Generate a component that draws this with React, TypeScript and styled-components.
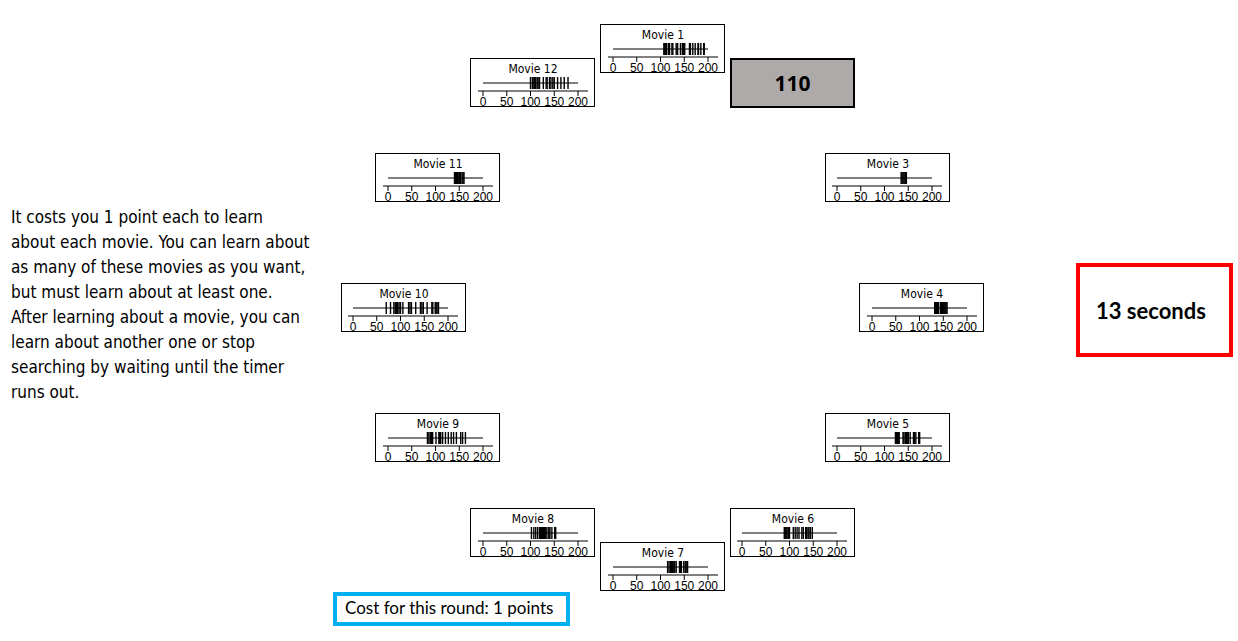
import React from "react";
import styled, { createGlobalStyle } from "styled-components";

const GlobalStyle = createGlobalStyle`
  body {
    margin: 0;
    background: #fff;
    color: #000;
  }
`;

const Page = styled.main`
  display: grid;
  grid-template-columns: 306px minmax(651px, 1fr) 157px;
  column-gap: 16px;
  padding: 24px 5px 15px 11px;
`;

const Instructions = styled.p`
  margin: 0;
  padding-top: 181px;
  font: 17px/25px "DejaVu Sans Condensed", "DejaVu Sans", sans-serif;
  white-space: nowrap;
`;

const Search = styled.section`
  display: flex;
  flex-direction: column;
  align-items: flex-start;
`;

const Ring = styled.div`
  position: relative;
  width: 643px;
  height: 568px;
  margin-left: 8px;
`;

const Card = styled.button<{ $x: number; $y: number }>`
  position: absolute;
  left: ${(p) => p.$x}px;
  top: ${(p) => p.$y}px;
  box-sizing: border-box;
  width: 125px;
  height: 49px;
  padding: 0;
  border: 1px solid #000;
  background: #fff;
  overflow: hidden;
  cursor: pointer;
`;

const RevealedCard = styled(Card)`
  height: 50px;
  border-width: 2px;
  background: #aeaaa9;
  color: #000;
  font: bold 21px/24px "Open Sans", sans-serif;
`;

const Plot = styled.svg`
  display: block;
  stroke: #000;
`;

const PlotTitle = styled.text`
  font: 12px "DejaVu Sans Condensed", "DejaVu Sans", sans-serif;
  text-anchor: middle;
  stroke: none;
`;

const TickLabel = styled.text`
  font: 12px "Liberation Sans", Arial, sans-serif;
  text-anchor: middle;
  stroke: none;
`;

const Cost = styled.output`
  box-sizing: border-box;
  min-width: 237px;
  padding: 2px 8px 4px;
  border: 4px solid #00b0f0;
  font: 17px/20px Lato, sans-serif;
  white-space: nowrap;
`;

const Timer = styled.div`
  align-self: start;
  display: flex;
  align-items: center;
  box-sizing: border-box;
  height: 94px;
  margin-top: 239px;
  padding: 2px 0 0 16px;
  border: 4px solid #f00;
  font: bold 22px/24px Lato, sans-serif;
  white-space: nowrap;
`;

type Movie = {
  id: number;
  x: number;
  y: number;
  origin: number;
  ratings: number[];
  revealed?: number;
};

const movies: Movie[] = [
  { id: 1, x: 259, y: 0, origin: 12, ratings: [107, 109, 111, 113, 117, 119, 124, 126, 133, 136, 142, 146, 148, 151, 161, 163, 168, 173, 179, 180, 185, 191, 192] },
  { id: 2, x: 389, y: 34, origin: 11, ratings: [], revealed: 110 },
  { id: 3, x: 484, y: 129, origin: 11, ratings: [135, 137, 139, 141, 143, 145, 146] },
  { id: 4, x: 518, y: 259, origin: 12, ratings: [132, 134, 136, 138, 140, 144, 146, 148, 150, 152, 154, 156, 158] },
  { id: 5, x: 484, y: 389, origin: 11, ratings: [123, 125, 127, 129, 131, 139, 141, 144, 146, 149, 150, 154, 161, 163, 166, 172, 174] },
  { id: 6, x: 389, y: 484, origin: 11, ratings: [89, 91, 93, 95, 98, 100, 108, 112, 116, 120, 126, 129, 134, 136, 139, 141, 144, 148] },
  { id: 7, x: 259, y: 518, origin: 12, ratings: [115, 118, 121, 123, 125, 128, 130, 133, 140, 142, 144, 149, 152, 154, 157] },
  { id: 8, x: 129, y: 484, origin: 12, ratings: [102, 107, 111, 115, 119, 121, 123, 125, 127, 129, 131, 133, 137, 139, 141, 145, 151, 153] },
  { id: 9, x: 34, y: 389, origin: 12, ratings: [83, 86, 89, 92, 94, 101, 107, 109, 111, 115, 121, 127, 133, 138, 144, 153, 157, 163] },
  { id: 10, x: 0, y: 259, origin: 11, ratings: [70, 79, 86, 89, 92, 94, 97, 100, 105, 117, 120, 123, 132, 142, 145, 148, 156, 166, 168, 173, 175, 177, 180] },
  { id: 11, x: 34, y: 129, origin: 12, ratings: [140, 142, 144, 146, 149, 151, 153, 156, 158, 160] },
  { id: 12, x: 129, y: 34, origin: 12, ratings: [100, 104, 107, 109, 111, 114, 116, 119, 127, 133, 135, 140, 143, 147, 150, 157, 164, 171, 179] },
];

const instructions = [
  "It costs you 1 point each to learn",
  "about each movie. You can learn about",
  "as many of these movies as you want,",
  "but must learn about at least one.",
  "After learning about a movie, you can",
  "learn about another one or stop",
  "searching by waiting until the timer",
  "runs out.",
];

const AXIS_WIDTH = 95;
const ticks = [0, 50, 100, 150, 200];

function StripPlot({ movie }: { movie: Movie }) {
  const { id, origin, ratings } = movie;
  const scale = (v: number) => origin + (v * AXIS_WIDTH) / 200;
  return (
    <Plot width="123" height="47">
      <PlotTitle x="62" y="14">Movie {id}</PlotTitle>
      <path d={`M${origin} 24h${AXIS_WIDTH}`} />
      {ratings.map((v) => (
        <path key={v} d={`M${scale(v)} 18v12`} strokeWidth="1.4" />
      ))}
      <path d={`M${origin - 5} 32h110`} />
      {ticks.map((v) => (
        <g key={v}>
          <path d={`M${scale(v)} 32v5`} />
          <TickLabel x={scale(v)} y="47">{v}</TickLabel>
        </g>
      ))}
    </Plot>
  );
}

export default function App() {
  return (
    <>
      <GlobalStyle />
      <Page>
        <Instructions>
          {instructions.map((line) => (
            <React.Fragment key={line}>
              {line}
              <br />
            </React.Fragment>
          ))}
        </Instructions>
        <Search>
          <Ring>
            {movies.map((m) =>
              m.revealed !== undefined ? (
                <RevealedCard key={m.id} type="button" $x={m.x} $y={m.y}>
                  {m.revealed}
                </RevealedCard>
              ) : (
                <Card key={m.id} type="button" $x={m.x} $y={m.y}>
                  <StripPlot movie={m} />
                </Card>
              )
            )}
          </Ring>
          <Cost>Cost for this round: 1 points</Cost>
        </Search>
        <Timer role="timer">13 seconds</Timer>
      </Page>
    </>
  );
}
